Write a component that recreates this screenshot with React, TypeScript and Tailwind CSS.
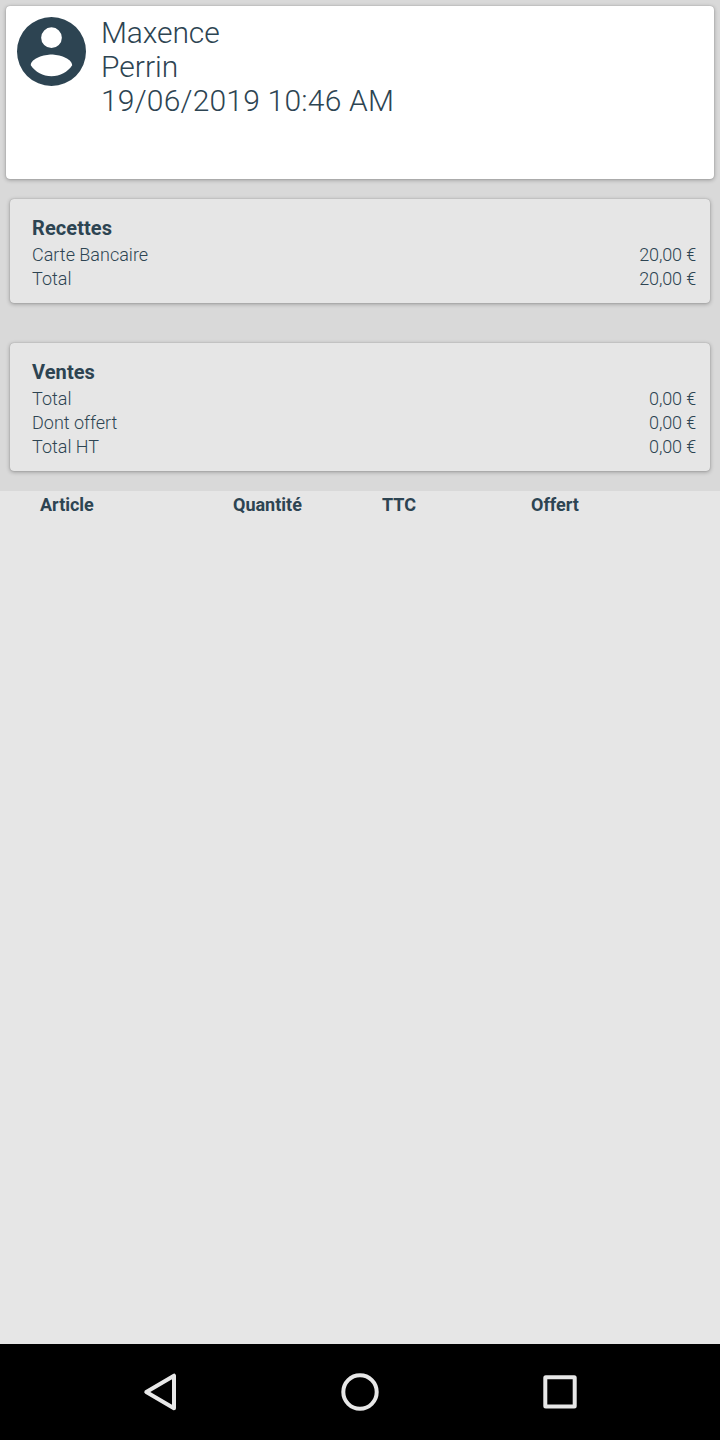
interface Line {
	label: string;
	value: string;
}

interface SummaryCardProps {
	title: string;
	lines: Line[];
}

const receipts: Line[] = [
	{ label: 'Carte Bancaire', value: '20,00 €' },
	{ label: 'Total', value: '20,00 €' },
];

const sales: Line[] = [
	{ label: 'Total', value: '0,00 €' },
	{ label: 'Dont offert', value: '0,00 €' },
	{ label: 'Total HT', value: '0,00 €' },
];

function SummaryCard({ title, lines }: SummaryCardProps) {
	return (
		<section className="rounded-[4px] bg-[#e6e6e6] pt-[15px] pr-3.5 pb-3 pl-[22px] shadow-[0_1px_4px_rgba(0,0,0,0.32),0_0_1px_rgba(0,0,0,0.3)]">
			<h2 className="mb-px text-[20px] leading-7 font-bold tracking-[0.08px]">{title}</h2>
			{lines.map((line) => (
				<div
					key={line.label}
					className="flex justify-between text-[18px] leading-6 font-light"
				>
					<span>{line.label}</span>
					<span className="tracking-[-0.15px]">{line.value}</span>
				</div>
			))}
		</section>
	);
}

function AccountIcon() {
	return (
		<svg viewBox="2 2 20 20" className="mt-[11px] size-[69px] shrink-0" fill="#2d4452">
			<path
				fillRule="evenodd"
				d="M12 2a10 10 0 1 0 0 20a10 10 0 0 0 0-20zM12 5a3 3 0 1 1 0 6a3 3 0 0 1 0-6zM12 19.2c-2.5 0-4.71-1.28-6-3.2c.03-2 4-3.1 6-3.1c2 0 5.97 1.1 6 3.1c-1.29 1.92-3.5 3.2-6 3.2z"
			/>
		</svg>
	);
}

function NavigationBar() {
	return (
		<nav className="flex h-24 shrink-0 items-center justify-center gap-[152px] bg-black">
			<svg className="size-12" viewBox="0 0 48 48" fill="none" stroke="#e8e8e8" strokeWidth="4" strokeLinejoin="round">
				<path d="M38 7.7v32.6L10.3 24z" />
			</svg>
			<svg className="size-12" viewBox="0 0 48 48" fill="none" stroke="#e8e8e8" strokeWidth="4">
				<circle cx="24" cy="24" r="16.7" />
			</svg>
			<svg className="size-12" viewBox="0 0 48 48" fill="none" stroke="#e8e8e8" strokeWidth="4" strokeLinejoin="round">
				<rect x="9.3" y="9.3" width="29.4" height="29.2" rx="0.5" />
			</svg>
		</nav>
	);
}

export default function App() {
	return (
		<div className="flex h-[1440px] w-[720px] flex-col bg-[#e6e6e6] font-['Roboto',sans-serif] text-[#2d4452]">
			<div className="bg-[#d9d9d9] pt-1.5 pb-5">
				<header className="mx-1.5 flex h-[173px] gap-[15px] rounded-[4px] bg-white pl-[11px] shadow-[0_1px_4px_rgba(0,0,0,0.32),0_0_1px_rgba(0,0,0,0.3)]">
					<AccountIcon />
					<div className="pt-2.5 text-[30px] leading-[34px] font-light">
						<p className="tracking-[-0.1px]">Maxence</p>
						<p>Perrin</p>
						<p className="tracking-[0.21px]">19/06/2019 10:46 AM</p>
					</div>
				</header>
				<div className="mx-2.5 mt-5 flex flex-col gap-10">
					<SummaryCard title="Recettes" lines={receipts} />
					<SummaryCard title="Ventes" lines={sales} />
				</div>
			</div>

			<main className="flex-1">
				<div className="grid grid-cols-[193px_149px_149px_1fr] pt-0.5 pl-10 text-[18px] leading-6 font-bold">
					<span>Article</span>
					<span>Quantité</span>
					<span>TTC</span>
					<span>Offert</span>
				</div>
			</main>

			<NavigationBar />
		</div>
	);
}
